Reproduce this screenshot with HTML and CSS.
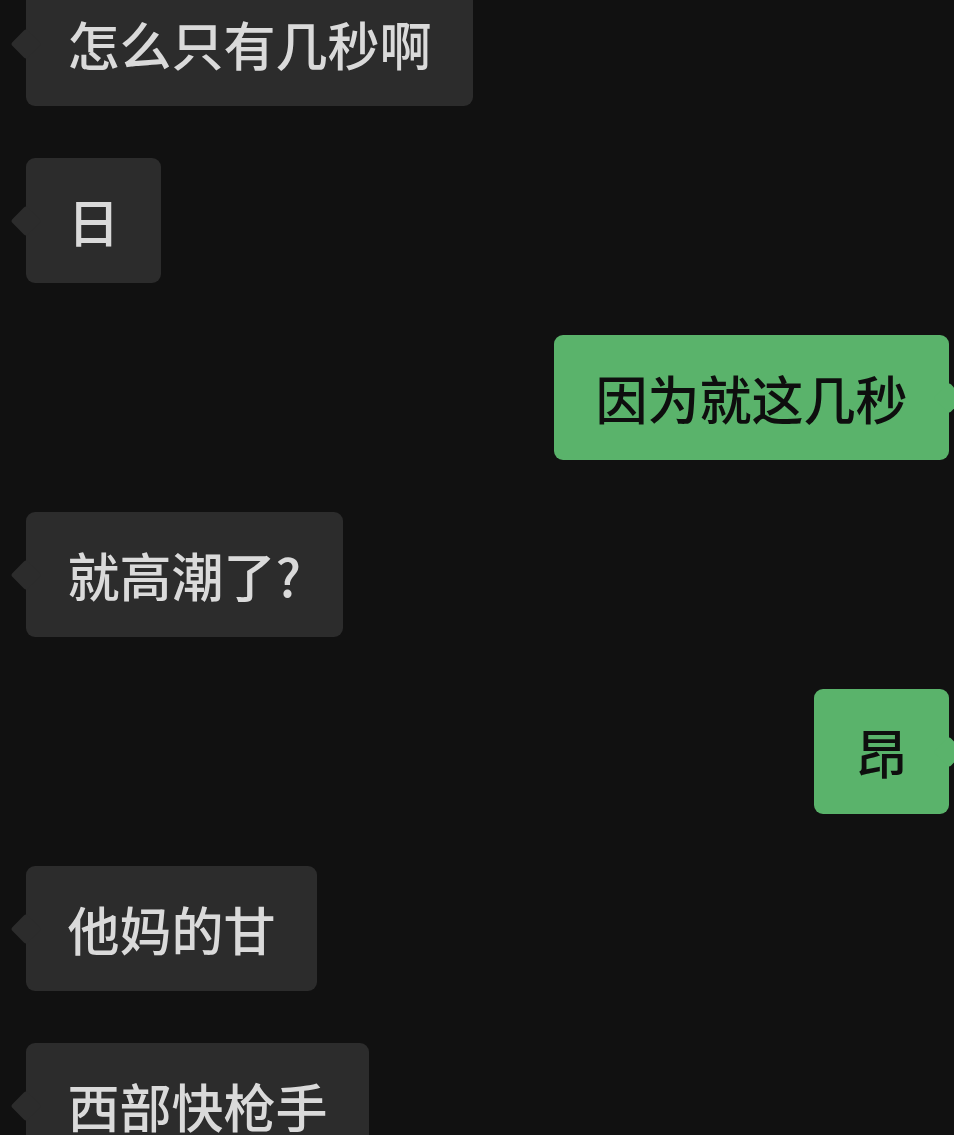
FILE: index.html
```html
<!DOCTYPE html>
<html lang="zh-CN">
<head>
<meta charset="utf-8">
<link rel="stylesheet" href="styles.css">
</head>
<body>
<div class="chat">
  <div class="msg left"><div class="bubble">怎么只有几秒啊</div></div>
  <div class="msg left"><div class="bubble">日</div></div>
  <div class="msg right"><div class="bubble">因为就这几秒</div></div>
  <div class="msg left"><div class="bubble">就高潮了?</div></div>
  <div class="msg right"><div class="bubble">昂</div></div>
  <div class="msg left"><div class="bubble">他妈的甘</div></div>
  <div class="msg left"><div class="bubble">西部快枪手</div></div>
</div>
</body>
</html>
```
FILE: styles.css
```css
html, body {
  margin: 0;
  padding: 0;
  background: #111111;
  overflow: hidden;
}
body {
  width: 954px;
  height: 1135px;
  font-family: "Noto Sans CJK SC", "Noto Sans", sans-serif;
}
.chat {
  display: flex;
  flex-direction: column;
  gap: 52px;
  margin-top: -19px;
}
.msg {
  display: flex;
}
.msg.left {
  justify-content: flex-start;
  padding-left: 26px;
}
.msg.right {
  justify-content: flex-end;
  padding-right: 5px;
}
.bubble {
  position: relative;
  height: 125px;
  box-sizing: border-box;
  padding: 0 41.5px;
  display: flex;
  align-items: center;
  font-size: 52px;
  font-weight: 500;
  line-height: 1;
  border-radius: 9px;
  white-space: nowrap;
}
.left .bubble {
  background: #2c2c2c;
  color: #dadada;
}
.right .bubble {
  background: #5ab36b;
  color: #0e0e0e;
}
.bubble::before {
  content: "";
  position: absolute;
  top: 50%;
  width: 22px;
  height: 22px;
  border-radius: 3px;
  transform: translateY(-50%) rotate(45deg);
}
.left .bubble::before {
  left: -11px;
  background: #2c2c2c;
}
.right .bubble::before {
  right: -11px;
  background: #5ab36b;
}
```
